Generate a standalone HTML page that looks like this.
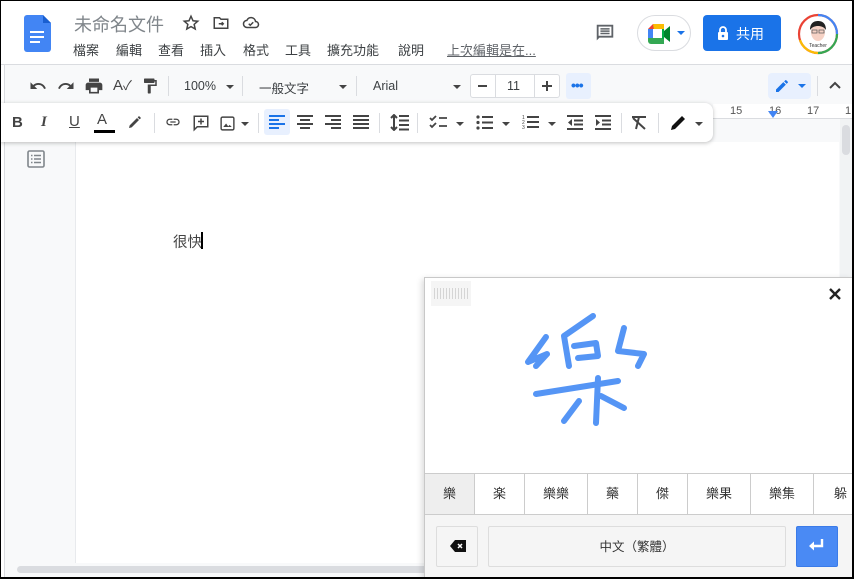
<!DOCTYPE html>
<html><head><meta charset="utf-8">
<style>
*{margin:0;padding:0;box-sizing:border-box}
html,body{width:854px;height:579px;overflow:hidden;background:#000}
body{font-family:"Liberation Sans","Noto Sans CJK TC",sans-serif;position:relative}
.a{position:absolute}
#frame{left:1px;top:1px;width:851px;height:576px;background:#f8f9fa;overflow:hidden}
.t{color:#3c4043;font-size:13px;white-space:nowrap}
.ic{position:absolute}
.sep{position:absolute;width:1px;background:#dadce0}
.arr{position:absolute;width:0;height:0;border-left:4px solid transparent;border-right:4px solid transparent;border-top:4px solid #444}
.cand{position:absolute;top:0;height:41px;border-right:1px solid #ccc;font-size:13px;color:#333;text-align:center;line-height:40px;font-family:"Liberation Sans","Noto Sans CJK TC",sans-serif}
</style></head><body>
<div id="frame" class="a">
<div class="a" style="left:0;top:0;width:851px;height:64px;background:#fff;border-bottom:1px solid #dadce0"></div>
<svg class="ic" style="left:23px;top:14px" width="27" height="37" viewBox="0 0 27 37"><path d="M3 0h16l8 8v26a3 3 0 0 1-3 3H3a3 3 0 0 1-3-3V3a3 3 0 0 1 3-3z" fill="#4285f4"/><path d="M19 0v8h8z" fill="#1a5fd0"/><rect x="6" y="16" width="14" height="2" fill="#fff"/><rect x="6" y="21" width="14" height="2" fill="#fff"/><rect x="6" y="26" width="10" height="2" fill="#fff"/></svg>
<div class="a" style="left:73px;top:10px;font-size:18px;color:#80868b">未命名文件</div>
<svg class="ic" style="left:181px;top:13px" width="18" height="18" viewBox="0 0 24 24"><path d="M12 3l2.7 6 6.3.6-4.8 4.2 1.4 6.2L12 16.8 6.4 20l1.4-6.2L3 9.6l6.3-.6z" fill="none" stroke="#444" stroke-width="2"/></svg>
<svg class="ic" style="left:211px;top:13px" width="18" height="18" viewBox="0 0 24 24"><path d="M3 5h7l2 2h9v12H3z" fill="none" stroke="#444" stroke-width="2"/><path d="M9 13h6m-2-2l2 2-2 2" fill="none" stroke="#444" stroke-width="2"/></svg>
<svg class="ic" style="left:241px;top:13px" width="18" height="18" viewBox="0 0 24 24"><path d="M7 18h11a4 4 0 0 0 0-8 6 6 0 0 0-11.5-1.5A4.5 4.5 0 0 0 7 18z" fill="none" stroke="#444" stroke-width="2"/><path d="M9 13l2 2 4-4" fill="none" stroke="#444" stroke-width="2"/></svg>
<div class="a t" style="left:72px;top:39px">檔案</div>
<div class="a t" style="left:115px;top:39px">編輯</div>
<div class="a t" style="left:157px;top:39px">查看</div>
<div class="a t" style="left:199px;top:39px">插入</div>
<div class="a t" style="left:242px;top:39px">格式</div>
<div class="a t" style="left:284px;top:39px">工具</div>
<div class="a t" style="left:326px;top:39px">擴充功能</div>
<div class="a t" style="left:397px;top:39px">說明</div>
<div class="a t" style="left:446px;top:39px;color:#5f6368;text-decoration:underline">上次編輯是在...</div>
<svg class="ic" style="left:593px;top:21px" width="22" height="22" viewBox="0 0 24 24"><path d="M3 3h18v14H6l-3 3z" fill="#5f6368"/><rect x="5" y="5" width="14" height="10" fill="#fff"/><path d="M7 7.5h10M7 10h10M7 12.5h10" stroke="#5f6368" stroke-width="1.6"/></svg>
<div class="a" style="left:636px;top:14px;width:54px;height:36px;border:1px solid #dadce0;border-radius:18px;background:#fff"></div>
<svg class="ic" style="left:647px;top:23px" width="26" height="20" viewBox="0 0 26 20"><path d="M0 5L5 0h11v6H6v0H0z" fill="#ea4335"/><path d="M5 0h11v6H6z" fill="#fbbc04"/><rect x="0" y="5" width="5" height="9" fill="#4285f4"/><path d="M0 14h16v6H3a3 3 0 0 1-3-3z" fill="#34a853"/><path d="M16 7l6-5v16l-6-5z" fill="#00832d"/><rect x="5" y="5" width="9" height="9" fill="#fff"/><path d="M14 5h2v10h-2z" fill="#00ac47"/></svg>
<div class="arr" style="left:676px;top:30px;border-top-color:#1a73e8"></div>
<div class="a" style="left:702px;top:14px;width:78px;height:36px;background:#1a73e8;border-radius:4px"></div>
<svg class="ic" style="left:716px;top:25px" width="12" height="14" viewBox="0 0 12 14"><rect x="1" y="6" width="10" height="8" rx="1" fill="#fff"/><path d="M3 6V4a3 3 0 0 1 6 0v2" fill="none" stroke="#fff" stroke-width="1.8"/><circle cx="6" cy="10" r="1.3" fill="#1a73e8"/></svg>
<div class="a" style="left:735px;top:23px;font-size:14px;color:#fff">共用</div>
<svg class="ic" style="left:796px;top:12px" width="42" height="42" viewBox="0 0 42 42"><circle cx="21" cy="21" r="19" fill="#fff" stroke="#ea4335" stroke-width="2.2"/><path d="M21 2a19 19 0 0 1 19 19" fill="none" stroke="#4285f4" stroke-width="2.2"/><path d="M40 21a19 19 0 0 1-19 19" fill="none" stroke="#34a853" stroke-width="2.2"/><path d="M21 40A19 19 0 0 1 3 27" fill="none" stroke="#fbbc04" stroke-width="2.2"/><ellipse cx="21" cy="19" rx="7" ry="9" fill="#f6d2c5"/><path d="M13 17c0-7 4-9 8-9s8 2 8 9c-2-3-5-4-8-4s-6 1-8 4z" fill="#222"/><rect x="15" y="17" width="5" height="3" fill="none" stroke="#555" stroke-width=".7"/><rect x="22" y="17" width="5" height="3" fill="none" stroke="#555" stroke-width=".7"/><text x="21" y="34" font-size="5" text-anchor="middle" fill="#333" font-family="Liberation Sans">Teacher</text></svg>

<svg class="ic" style="left:27px;top:76px" width="20" height="18" viewBox="0 0 24 24"><path d="M12.5 8c-2.6 0-5 1-6.9 2.6L2 7v9h9l-3.6-3.6c1.4-1.2 3.2-1.9 5.1-1.9 3.5 0 6.5 2.3 7.6 5.5l2.4-.8C21.1 11 17.1 8 12.5 8z" fill="#444"/></svg>
<svg class="ic" style="left:55px;top:76px" width="20" height="18" viewBox="0 0 24 24"><path d="M11.5 8c2.6 0 5 1 6.9 2.6L22 7v9h-9l3.6-3.6c-1.4-1.2-3.2-1.9-5.1-1.9-3.5 0-6.5 2.3-7.6 5.5L1.5 15.2C2.9 11 6.9 8 11.5 8z" fill="#444"/></svg>
<svg class="ic" style="left:83px;top:75px" width="20" height="20" viewBox="0 0 24 24"><path d="M19 8H5c-1.7 0-3 1.3-3 3v6h4v4h12v-4h4v-6c0-1.7-1.3-3-3-3zm-3 11H8v-5h8v5zM18 3H6v4h12z" fill="#444"/></svg>
<div class="a" style="left:112px;top:74px;font-size:15px;color:#444">A<span style="font-size:13px">✓</span></div>
<svg class="ic" style="left:140px;top:75px" width="18" height="20" viewBox="0 0 24 24"><path d="M18 4V3c0-.6-.4-1-1-1H5c-.6 0-1 .4-1 1v4c0 .6.4 1 1 1h12c.6 0 1-.4 1-1V6h1v4H9v11c0 .6.4 1 1 1h2c.6 0 1-.4 1-1v-9h8V4z" fill="#444"/></svg>
<div class="sep" style="left:167px;top:75px;height:20px"></div>
<div class="a t" style="left:183px;top:78px;font-size:12.5px">100%</div>
<div class="arr" style="left:225px;top:84px"></div>
<div class="sep" style="left:241px;top:75px;height:20px"></div>
<div class="a t" style="left:258px;top:77px;font-size:12.5px">一般文字</div>
<div class="arr" style="left:338px;top:84px"></div>
<div class="sep" style="left:355px;top:75px;height:20px"></div>
<div class="a t" style="left:372px;top:78px;font-size:12.5px">Arial</div>
<div class="arr" style="left:452px;top:84px"></div>
<div class="a" style="left:469px;top:73px;width:90px;height:24px;border:1px solid #dadce0;border-radius:3px;background:#fff"></div>
<div class="a" style="left:494px;top:73px;width:1px;height:24px;background:#dadce0"></div>
<div class="a" style="left:533px;top:73px;width:1px;height:24px;background:#dadce0"></div>
<div class="a" style="left:477px;top:84px;width:9px;height:2px;background:#444"></div>
<div class="a t" style="left:506px;top:78px;font-size:12.5px">11</div>
<div class="a" style="left:541px;top:84px;width:10px;height:2px;background:#444"></div>
<div class="a" style="left:545px;top:80px;width:2px;height:10px;background:#444"></div>
<div class="a" style="left:565px;top:72px;width:25px;height:26px;background:#e8f0fe;border-radius:3px"></div>
<div class="a" style="left:570px;top:76px;font-size:14px;color:#1a73e8;letter-spacing:-1px;font-weight:bold">•••</div>
<div class="a" style="left:767px;top:72px;width:43px;height:26px;background:#e8f0fe;border-radius:4px"></div>
<svg class="ic" style="left:773px;top:77px" width="16" height="16" viewBox="0 0 24 24"><path d="M3 17.2V21h3.8L17.8 10l-3.8-3.8zM20.7 7a1 1 0 0 0 0-1.4l-2.3-2.3a1 1 0 0 0-1.4 0l-1.8 1.8 3.8 3.8z" fill="#1a73e8"/></svg>
<div class="arr" style="left:797px;top:83px;border-top-color:#1a73e8"></div>
<div class="sep" style="left:816px;top:75px;height:20px"></div>
<svg class="ic" style="left:827px;top:78px" width="14" height="12" viewBox="0 0 14 12"><path d="M2 9l5-5 5 5" fill="none" stroke="#444" stroke-width="2"/></svg>

<div class="a" style="left:712px;top:103px;width:139px;height:15px;background:#fff;border-bottom:1px solid #dadce0"></div>
<div class="a" style="left:729px;top:104px;font-size:11px;color:#555">15</div>
<div class="a" style="left:768px;top:104px;font-size:11px;color:#555">16</div>
<div class="a" style="left:806px;top:104px;font-size:11px;color:#555">17</div>
<div class="a" style="left:844px;top:104px;font-size:11px;color:#555">1</div>
<div class="a" style="left:767px;top:110px;width:0;height:0;border-left:5px solid transparent;border-right:5px solid transparent;border-top:7px solid #4285f4"></div>

<div class="a" style="left:0;top:64px;width:4px;height:512px;background:#fff;border-right:1px solid #dadce0"></div>
<div class="a" style="left:74px;top:141px;width:764px;height:421px;background:#fff;border-left:1px solid #e8eaed"></div>
<svg class="ic" style="left:26px;top:149px" width="18" height="18" viewBox="0 0 18 18"><rect x="1" y="1" width="16" height="16" rx="1.5" fill="none" stroke="#80868b" stroke-width="1.6"/><path d="M4 5.5h1.5M7 5.5h7M4 9h1.5M7 9h7M4 12.5h1.5M7 12.5h7" stroke="#80868b" stroke-width="1.6"/></svg>
<div class="a" style="left:172px;top:230px;font-size:14.5px;color:#444">很快</div>
<div class="a" style="left:200px;top:231px;width:2px;height:17px;background:#000"></div>
<div class="a" style="left:839px;top:118px;width:12px;height:458px;background:#f1f3f4"></div>
<div class="a" style="left:841px;top:124px;width:8px;height:30px;background:#dadce0;border-radius:4px"></div>
<div class="a" style="left:16px;top:565px;width:410px;height:7px;background:#dadce0;border-radius:4px"></div>

<div class="a" style="left:-1px;top:102px;width:713px;height:39px;background:#fff;border-radius:0 8px 8px 0;box-shadow:0 1px 4px rgba(0,0,0,.25)"></div>
<div class="a" style="left:11px;top:113px;font-size:15px;font-weight:bold;color:#444">B</div>
<div class="a" style="left:40px;top:113px;font-size:15px;font-style:italic;font-weight:bold;color:#444;font-family:'Liberation Serif',serif">I</div>
<div class="a" style="left:68px;top:112px;font-size:15px;color:#444;text-decoration:underline">U</div>
<div class="a" style="left:96px;top:110px;font-size:15px;color:#444">A</div>
<div class="a" style="left:93px;top:129px;width:21px;height:3px;background:#000"></div>
<svg class="ic" style="left:126px;top:113px" width="16" height="16" viewBox="0 0 24 24"><path d="M3 21l4-1 11-11-3-3L4 17zM16 5l3 3 2-2-3-3z" fill="#444"/></svg>
<div class="sep" style="left:153px;top:112px;height:20px"></div>
<svg class="ic" style="left:162px;top:113px" width="20" height="16" viewBox="0 0 24 24"><path d="M3.9 12c0-1.7 1.4-3.1 3.1-3.1h4V7H7a5 5 0 0 0 0 10h4v-1.9H7c-1.7 0-3.1-1.4-3.1-3.1zM8 13h8v-2H8zm9-6h-4v1.9h4c1.7 0 3.1 1.4 3.1 3.1s-1.4 3.1-3.1 3.1h-4V17h4a5 5 0 0 0 0-10z" fill="#444"/></svg>
<svg class="ic" style="left:191px;top:113px" width="18" height="18" viewBox="0 0 24 24"><path d="M3 3h18v14H7l-4 4z" fill="none" stroke="#444" stroke-width="2"/><path d="M12 6v8M8 10h8" stroke="#444" stroke-width="2"/></svg>
<svg class="ic" style="left:218px;top:114px" width="17" height="17" viewBox="0 0 24 24"><rect x="3" y="3" width="18" height="18" rx="2" fill="none" stroke="#444" stroke-width="2"/><path d="M6 17l4-5 3 4 2-2 3 3z" fill="#444"/></svg>
<div class="arr" style="left:240px;top:121px"></div>
<div class="sep" style="left:257px;top:112px;height:20px"></div>
<div class="a" style="left:263px;top:108px;width:26px;height:26px;background:#e8f0fe;border-radius:3px"></div>
<svg class="ic" style="left:268px;top:114px" width="16" height="14" viewBox="0 0 16 14"><path d="M0 1h16M0 5h10M0 9h16M0 13h10" stroke="#1a73e8" stroke-width="2"/></svg>
<svg class="ic" style="left:296px;top:114px" width="16" height="14" viewBox="0 0 16 14"><path d="M0 1h16M3 5h10M0 9h16M3 13h10" stroke="#444" stroke-width="2"/></svg>
<svg class="ic" style="left:324px;top:114px" width="16" height="14" viewBox="0 0 16 14"><path d="M0 1h16M6 5h10M0 9h16M6 13h10" stroke="#444" stroke-width="2"/></svg>
<svg class="ic" style="left:352px;top:114px" width="16" height="14" viewBox="0 0 16 14"><path d="M0 1h16M0 5h16M0 9h16M0 13h16" stroke="#444" stroke-width="2"/></svg>
<div class="sep" style="left:378px;top:112px;height:20px"></div>
<svg class="ic" style="left:389px;top:113px" width="19" height="17" viewBox="0 0 19 17"><path d="M4 1v15M1 4l3-3 3 3M1 13l3 3 3-3M9 2h10M9 6.5h10M9 11h10M9 15.5h10" fill="none" stroke="#444" stroke-width="2"/></svg>
<div class="sep" style="left:416px;top:112px;height:20px"></div>
<svg class="ic" style="left:428px;top:114px" width="18" height="14" viewBox="0 0 18 14"><path d="M1 3l2 2 4-4M1 10l2 2 4-4M10 3h8M10 11h8" fill="none" stroke="#444" stroke-width="1.8"/></svg>
<div class="arr" style="left:455px;top:121px"></div>
<svg class="ic" style="left:475px;top:114px" width="17" height="15" viewBox="0 0 17 15"><circle cx="2" cy="2" r="1.6" fill="#444"/><circle cx="2" cy="7.5" r="1.6" fill="#444"/><circle cx="2" cy="13" r="1.6" fill="#444"/><path d="M6 2h11M6 7.5h11M6 13h11" stroke="#444" stroke-width="2"/></svg>
<div class="arr" style="left:501px;top:121px"></div>
<svg class="ic" style="left:521px;top:113px" width="17" height="16" viewBox="0 0 17 16"><text x="0" y="5" font-size="5" fill="#444" font-family="Liberation Sans">1</text><text x="0" y="10" font-size="5" fill="#444" font-family="Liberation Sans">2</text><text x="0" y="15" font-size="5" fill="#444" font-family="Liberation Sans">3</text><path d="M5 3h12M5 8h12M5 13h12" stroke="#444" stroke-width="2"/></svg>
<div class="arr" style="left:547px;top:121px"></div>
<svg class="ic" style="left:566px;top:114px" width="16" height="15" viewBox="0 0 16 15"><path d="M0 1h16M7 5.5h9M7 9.5h9M0 14h16" stroke="#444" stroke-width="2"/><path d="M5 4v7L1 7.5z" fill="#444"/></svg>
<svg class="ic" style="left:594px;top:114px" width="16" height="15" viewBox="0 0 16 15"><path d="M0 1h16M7 5.5h9M7 9.5h9M0 14h16" stroke="#444" stroke-width="2"/><path d="M1 4v7l4-3.5z" fill="#444"/></svg>
<div class="sep" style="left:620px;top:112px;height:20px"></div>
<svg class="ic" style="left:630px;top:114px" width="16" height="15" viewBox="0 0 16 15"><path d="M1 2h14M8 2L5 14M2 3l12 11" stroke="#444" stroke-width="2"/></svg>
<div class="sep" style="left:657px;top:112px;height:20px"></div>
<svg class="ic" style="left:668px;top:113px" width="18" height="18" viewBox="0 0 18 18"><path d="M2 16l1-4L13 2l3 3L6 15z" fill="#111"/></svg>
<div class="arr" style="left:694px;top:121px"></div>

<div class="a" style="left:423px;top:276px;width:429px;height:300px;background:#fff;border:1px solid #c8c8c8;box-shadow:-2px 2px 6px rgba(0,0,0,.15)"></div>
<div class="a" style="left:430px;top:280px;width:40px;height:25px;background:#f5f5f5"></div>
<div class="a" style="left:433px;top:287px;width:34px;height:11px;background:repeating-linear-gradient(90deg,#d5d5d5 0 1px,transparent 1px 3px)"></div>
<svg class="ic" style="left:827px;top:286px" width="14" height="14" viewBox="0 0 14 14"><path d="M2 2l10 10M12 2L2 12" stroke="#222" stroke-width="2.4"/></svg>
<svg class="ic" style="left:423px;top:276px" width="429" height="200" viewBox="423 276 429 200"><g fill="none" stroke="#5595f5" stroke-width="6" stroke-linecap="round" stroke-linejoin="round">
<path d="M545 336L527 361L546 353L535 365"/>
<path d="M592 315L563 335L568 365"/>
<path d="M573 345L595 342L597 355L577 357"/>
<path d="M623 327L617 350L643 353L637 365"/>
<path d="M535 393L617 380"/>
<path d="M597 377L595 422"/>
<path d="M578 400L563 420"/>
<path d="M600 395L623 407"/>
</g></svg>
<div class="a" style="left:424px;top:472px;width:427px;height:42px;border-top:1px solid #ccc;border-bottom:1px solid #ccc;background:#fff;overflow:hidden">
<div class="cand" style="left:0;width:50px;background:#eee">樂</div>
<div class="cand" style="left:50px;width:50px">楽</div>
<div class="cand" style="left:100px;width:63px">樂樂</div>
<div class="cand" style="left:163px;width:50px">藥</div>
<div class="cand" style="left:213px;width:50px">傑</div>
<div class="cand" style="left:263px;width:63px">樂果</div>
<div class="cand" style="left:326px;width:63px">樂集</div>
<div class="cand" style="left:389px;width:50px;text-align:left;padding-left:20px">躲</div>
</div>
<div class="a" style="left:424px;top:514px;width:427px;height:62px;background:#f5f5f5"></div>
<div class="a" style="left:435px;top:525px;width:42px;height:41px;border:1px solid #ddd;background:#f5f5f5;border-radius:2px"></div>
<svg class="ic" style="left:449px;top:539px" width="16" height="12" viewBox="0 0 16 12"><path d="M5 0h11v12H5L0 6z" fill="#111"/><path d="M8 4l4 4M12 4l-4 4" stroke="#fff" stroke-width="1.5"/></svg>
<div class="a" style="left:487px;top:525px;width:298px;height:41px;border:1px solid #ddd;background:#f5f5f5;border-radius:2px;text-align:center;line-height:40px;font-size:12.5px;color:#333">中文（繁體）</div>
<div class="a" style="left:795px;top:525px;width:42px;height:41px;background:#4a8af4;border:1px solid #3b7be8;border-radius:2px"></div>
<svg class="ic" style="left:807px;top:538px" width="16" height="12" viewBox="0 0 16 12"><path d="M14 0v7H5" fill="none" stroke="#fff" stroke-width="2.4"/><path d="M6 2.5L1 7l5 4.5z" fill="#fff"/></svg>
</div>
</body></html>
